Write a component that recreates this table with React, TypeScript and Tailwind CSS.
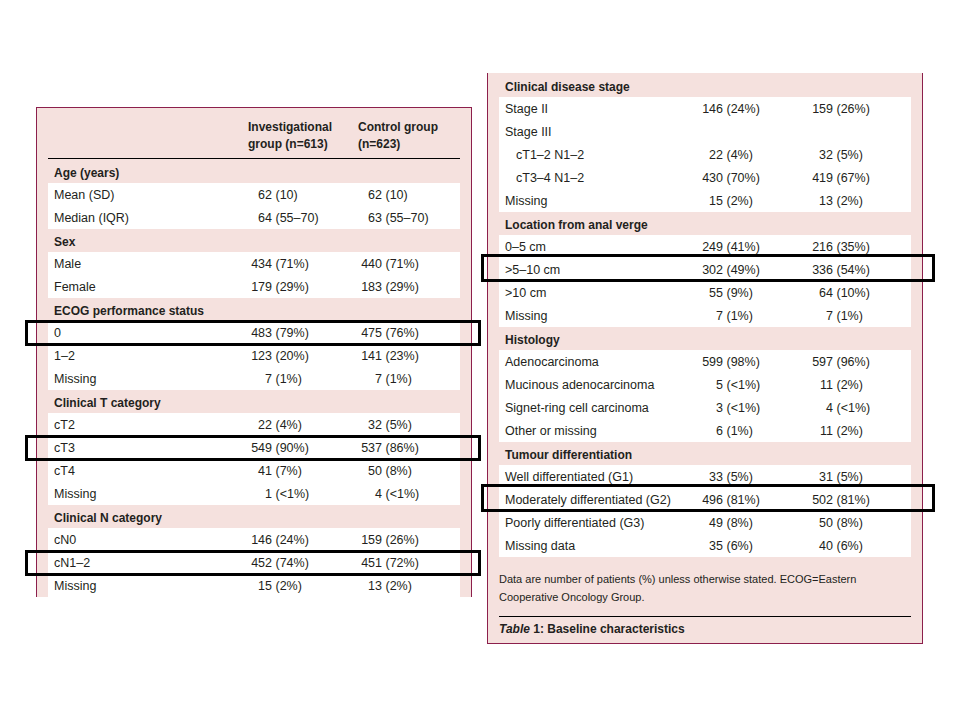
type Line = { label: string; a?: string; b?: string; indent?: boolean; mark?: boolean };
type Section = { title: string; rows: Line[] };

const left: Section[] = [
  {
    title: 'Age (years)',
    rows: [
      { label: 'Mean (SD)', a: '62 (10)', b: '62 (10)' },
      { label: 'Median (IQR)', a: '64 (55–70)', b: '63 (55–70)' },
    ],
  },
  {
    title: 'Sex',
    rows: [
      { label: 'Male', a: '434 (71%)', b: '440 (71%)' },
      { label: 'Female', a: '179 (29%)', b: '183 (29%)' },
    ],
  },
  {
    title: 'ECOG performance status',
    rows: [
      { label: '0', a: '483 (79%)', b: '475 (76%)', mark: true },
      { label: '1–2', a: '123 (20%)', b: '141 (23%)' },
      { label: 'Missing', a: '7 (1%)', b: '7 (1%)' },
    ],
  },
  {
    title: 'Clinical T category',
    rows: [
      { label: 'cT2', a: '22 (4%)', b: '32 (5%)' },
      { label: 'cT3', a: '549 (90%)', b: '537 (86%)', mark: true },
      { label: 'cT4', a: '41 (7%)', b: '50 (8%)' },
      { label: 'Missing', a: '1 (<1%)', b: '4 (<1%)' },
    ],
  },
  {
    title: 'Clinical N category',
    rows: [
      { label: 'cN0', a: '146 (24%)', b: '159 (26%)' },
      { label: 'cN1–2', a: '452 (74%)', b: '451 (72%)', mark: true },
      { label: 'Missing', a: '15 (2%)', b: '13 (2%)' },
    ],
  },
];

const right: Section[] = [
  {
    title: 'Clinical disease stage',
    rows: [
      { label: 'Stage II', a: '146 (24%)', b: '159 (26%)' },
      { label: 'Stage III' },
      { label: 'cT1–2 N1–2', a: '22 (4%)', b: '32 (5%)', indent: true },
      { label: 'cT3–4 N1–2', a: '430 (70%)', b: '419 (67%)', indent: true },
      { label: 'Missing', a: '15 (2%)', b: '13 (2%)' },
    ],
  },
  {
    title: 'Location from anal verge',
    rows: [
      { label: '0–5 cm', a: '249 (41%)', b: '216 (35%)' },
      { label: '>5–10 cm', a: '302 (49%)', b: '336 (54%)', mark: true },
      { label: '>10 cm', a: '55 (9%)', b: '64 (10%)' },
      { label: 'Missing', a: '7 (1%)', b: '7 (1%)' },
    ],
  },
  {
    title: 'Histology',
    rows: [
      { label: 'Adenocarcinoma', a: '599 (98%)', b: '597 (96%)' },
      { label: 'Mucinous adenocarcinoma', a: '5 (<1%)', b: '11 (2%)' },
      { label: 'Signet-ring cell carcinoma', a: '3 (<1%)', b: '4 (<1%)' },
      { label: 'Other or missing', a: '6 (1%)', b: '11 (2%)' },
    ],
  },
  {
    title: 'Tumour differentiation',
    rows: [
      { label: 'Well differentiated (G1)', a: '33 (5%)', b: '31 (5%)' },
      { label: 'Moderately differentiated (G2)', a: '496 (81%)', b: '502 (81%)', mark: true },
      { label: 'Poorly differentiated (G3)', a: '49 (8%)', b: '50 (8%)' },
      { label: 'Missing data', a: '35 (6%)', b: '40 (6%)' },
    ],
  },
];

// number right-aligned, bracket part lined up on the "("
function Val({ v }: { v?: string }) {
  if (!v) return <span />;
  const i = v.indexOf(' ');
  return (
    <span className="flex">
      <span className="w-[24px] text-right">{v.slice(0, i)}</span>
      <span className="pl-[3.5px]">{v.slice(i + 1)}</span>
    </span>
  );
}

function Table({ sections, side }: { sections: Section[]; side: 'l' | 'r' }) {
  return (
    <>
      {sections.map((s) => (
        <div key={s.title}>
          <div className="flex h-[23px] items-center pl-[6px] pt-[2px] text-[12px] font-bold">{s.title}</div>
          <div className="bg-white">
            {s.rows.map((r) => (
              <div
                key={r.label}
                className="relative grid h-[23px] grid-cols-[200px_110px_1fr] items-center pt-[2px]"
              >
                <span className={r.indent ? 'pl-[17px]' : 'pl-[6px]'}>{r.label}</span>
                <Val v={r.a} />
                <Val v={r.b} />
                {r.mark ? (
                  <div
                    className={
                      side === 'l'
                        ? 'absolute -top-[1px] -bottom-[2px] -left-[23px] -right-[21px] z-10 border-[3px] border-black'
                        : 'absolute -top-[4px] -bottom-[1px] -left-[18px] -right-[24px] z-10 border-[3px] border-black'
                    }
                  />
                ) : null}
              </div>
            ))}
          </div>
        </div>
      ))}
    </>
  );
}

export default function App() {
  return (
    <div
      className="h-[720px] w-[960px] overflow-hidden bg-white text-[12.5px] text-[#231f20]"
      style={{ fontFamily: '"Liberation Sans", Arial, sans-serif' }}
    >
      <div className="flex items-start gap-[15px] pl-[36px]">
        {/* left half of the table */}
        <div className="mt-[107px] h-[490px] w-[436px] border-x border-t border-[#8c1f4c] bg-[#f5e1de] px-[11px]">
          <div className="grid h-[51px] grid-cols-[200px_110px_1fr] border-b border-black pt-[11px] text-[12px] font-bold leading-[17px]">
            <span />
            <span>
              Investigational
              <br />
              group (n=613)
            </span>
            <span>
              Control group
              <br />
              (n=623)
            </span>
          </div>
          <div className="pt-[1px]">
            <Table sections={left} side="l" />
          </div>
        </div>

        {/* right half, continued */}
        <div className="mt-[73px] w-[436px] border-x border-b border-[#8c1f4c] bg-[#f5e1de] px-[11px] pb-[5px] pt-[1px]">
          <Table sections={right} side="r" />
          <p className="pt-[13px] text-[11px] leading-[18px]">
            Data are number of patients (%) unless otherwise stated. ECOG=Eastern
            <br />
            Cooperative Oncology Group.
          </p>
          <div className="mt-[10px] border-t border-black pt-[3px] text-[12px] font-bold leading-[18px]">
            <i>Table</i> 1: Baseline characteristics
          </div>
        </div>
      </div>
    </div>
  );
}
